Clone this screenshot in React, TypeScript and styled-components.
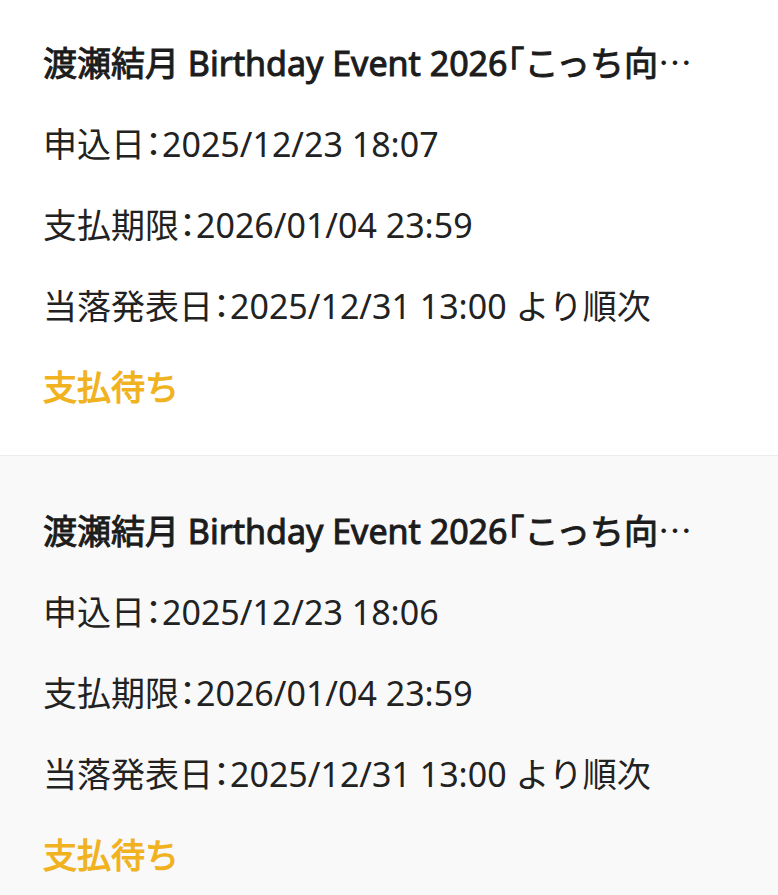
import React from "react";
import styled, { createGlobalStyle } from "styled-components";

const GlobalStyle = createGlobalStyle`
  html, body {
    margin: 0;
    padding: 0;
    background: #ffffff;
    overflow: hidden;
  }
  body {
    font-family: "Noto Sans", "Noto Sans CJK JP", sans-serif;
    color: #222222;
  }
`;

interface Application {
  title: string;
  appliedAt: string;
  payBy: string;
  announceAt: string;
  status: string;
}

// titles are shown as the app cuts them, ending on a CJK ellipsis
const applications: Application[] = [
  {
    title: "渡瀬結月 Birthday Event 2026「こっち向",
    appliedAt: "2025/12/23 18:07",
    payBy: "2026/01/04 23:59",
    announceAt: "2025/12/31 13:00 より順次",
    status: "支払待ち",
  },
  {
    title: "渡瀬結月 Birthday Event 2026「こっち向",
    appliedAt: "2025/12/23 18:06",
    payBy: "2026/01/04 23:59",
    announceAt: "2025/12/31 13:00 より順次",
    status: "支払待ち",
  },
];

// the list is scrolled a little, so the first card starts above the window
const List = styled.div`
  margin-top: -12px;
  display: flex;
  flex-direction: column;
`;

const Card = styled.div<{ $shaded: boolean }>`
  display: flex;
  flex-direction: column;
  gap: 33px;
  padding: 50px 43px 44px 43px;
  background: ${(p) => (p.$shaded ? "#f9f9f9" : "#ffffff")};
  border-bottom: 1px solid #ececec;
`;

// no medium cut is installed, so a thin stroke thickens the regular face
const Title = styled.div`
  font-size: 34px;
  line-height: 48px;
  font-weight: 400;
  -webkit-text-stroke: 1px #1c1c1c;
  color: #1c1c1c;
  white-space: nowrap;
  overflow: hidden;
`;

const Bracket = styled.span`
  font-feature-settings: "halt";
`;

const Ellipsis = styled.span`
  font-family: "Noto Sans CJK JP", sans-serif;
  -webkit-text-stroke: 0;
`;

const Line = styled.div`
  font-size: 34px;
  line-height: 48px;
  font-weight: 400;
  color: #222222;
  white-space: nowrap;
`;

const Colon = styled.span`
  font-feature-settings: "halt";
`;

const Status = styled.div`
  font-size: 34px;
  line-height: 48px;
  font-weight: 400;
  -webkit-text-stroke: 1.2px #f0b21e;
  color: #f0b21e;
`;

function ApplicationCard({ item, shaded }: { item: Application; shaded: boolean }) {
  const [before, after] = item.title.split("「");
  return (
    <Card $shaded={shaded}>
      <Title>
        {before}
        <Bracket>「</Bracket>
        {after}
        <Ellipsis>…</Ellipsis>
      </Title>
      <Line>
        申込日<Colon>：</Colon>
        {item.appliedAt}
      </Line>
      <Line>
        支払期限<Colon>：</Colon>
        {item.payBy}
      </Line>
      <Line>
        当落発表日<Colon>：</Colon>
        {item.announceAt}
      </Line>
      <Status>{item.status}</Status>
    </Card>
  );
}

export default function App() {
  return (
    <>
      <GlobalStyle />
      <List>
        {applications.map((a, i) => (
          <ApplicationCard key={i} item={a} shaded={i % 2 === 1} />
        ))}
      </List>
    </>
  );
}
